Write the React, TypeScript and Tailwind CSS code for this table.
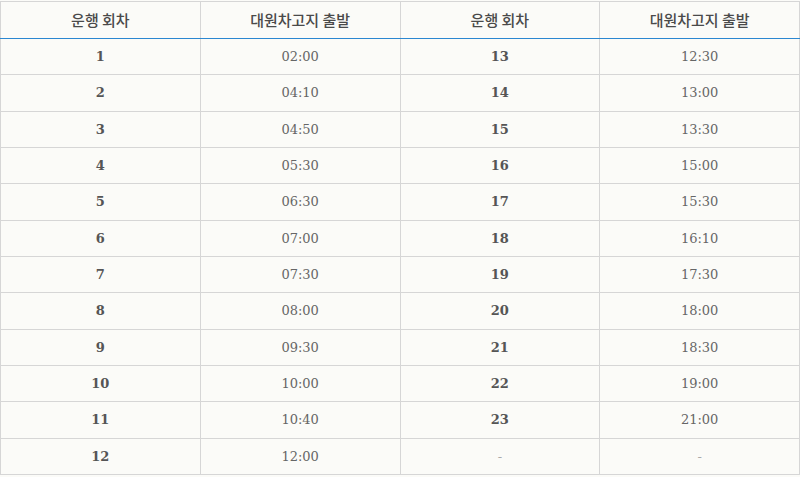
const left = [
  ['1', '02:00'],
  ['2', '04:10'],
  ['3', '04:50'],
  ['4', '05:30'],
  ['5', '06:30'],
  ['6', '07:00'],
  ['7', '07:30'],
  ['8', '08:00'],
  ['9', '09:30'],
  ['10', '10:00'],
  ['11', '10:40'],
  ['12', '12:00'],
]

const right = [
  ['13', '12:30'],
  ['14', '13:00'],
  ['15', '13:30'],
  ['16', '15:00'],
  ['17', '15:30'],
  ['18', '16:10'],
  ['19', '17:30'],
  ['20', '18:00'],
  ['21', '18:30'],
  ['22', '19:00'],
  ['23', '21:00'],
  ['-', '-'],
]

const cell = 'border border-[#d6d6d6] text-center text-[13px] font-["DejaVu_Serif",serif]'

export default function App() {
  return (
    <div className="w-[800px] h-[477px] bg-[#fbfbf8] pt-[1px] overflow-hidden">
      <table className="w-full border-collapse table-fixed text-[#555]">
        <thead>
          <tr className="h-[37px]">
            {['운행 회차', '대원차고지 출발', '운행 회차', '대원차고지 출발'].map((h, i) => (
              <th
                key={i}
                className="border border-[#d6d6d6] border-b-[#2b87d1] text-[15px] font-medium text-[#4a4a4a]"
                style={{ fontFamily: '"Noto Sans CJK KR", "Noto Sans", sans-serif' }}
              >
                {h}
              </th>
            ))}
          </tr>
        </thead>
        <tbody>
          {left.map((row, i) => {
            const c = i === 0 ? cell + ' border-t-0' : cell
            return (
              <tr key={i} className="h-[36.33px]">
                <td className={c + ' font-bold'}>{row[0]}</td>
                <td className={c + ' text-[#666]'}>{row[1]}</td>
                <td className={right[i][0] === '-' ? c + ' text-[#aaa]' : c + ' font-bold'}>
                  {right[i][0]}
                </td>
                <td className={right[i][1] === '-' ? c + ' text-[#aaa]' : c + ' text-[#666]'}>
                  {right[i][1]}
                </td>
              </tr>
            )
          })}
        </tbody>
      </table>
    </div>
  )
}
